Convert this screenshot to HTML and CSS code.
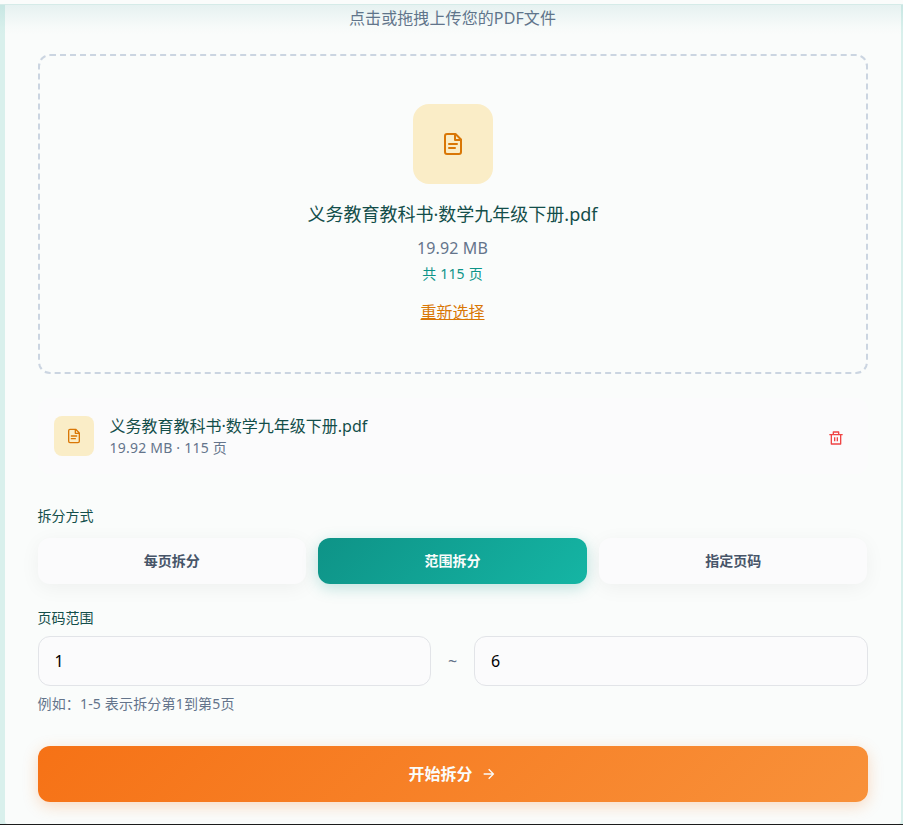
FILE: index.html
```html
<!DOCTYPE html>
<html lang="zh-CN">
<head>
<meta charset="utf-8">
<title>PDF 拆分</title>
<link rel="stylesheet" href="styles.css">
</head>
<body>
<div class="topbar"></div>
<main class="stage">
  <section class="card">
    <p class="lead">点击或拖拽上传您的PDF文件</p>
    <div class="dropzone">
      <div class="file-icon file-icon-lg">
        <svg viewBox="0 0 24 24" width="24" height="24"><path class="stroke" d="M14.500 2H6A2 2 0 0 0 4 4V20A2 2 0 0 0 6 22H18A2 2 0 0 0 20 20V7.500ZM14 2V8H20M8 12H16M8 16H14"/></svg>
      </div>
      <p class="drop-name">义务教育教科书·数学九年级下册.pdf</p>
      <p class="drop-size">19.92 MB</p>
      <p class="drop-pages">共 115 页</p>
      <a class="reselect">重新选择</a>
    </div>
    <div class="file-row">
      <div class="file-icon file-icon-sm">
        <svg viewBox="0 0 24 24" width="16" height="16"><path class="stroke" d="M14.500 2H6A2 2 0 0 0 4 4V20A2 2 0 0 0 6 22H18A2 2 0 0 0 20 20V7.500ZM14 2V8H20M8 12H16M8 16H14"/></svg>
      </div>
      <div class="file-info">
        <p class="file-name">义务教育教科书·数学九年级下册.pdf</p>
        <p class="file-meta">19.92 MB · 115 页</p>
      </div>
      <button class="delete" aria-label="删除">
        <svg viewBox="0 0 24 24" width="16" height="16"><path d="M17 6H22V8H20V21C20 21.5523 19.5523 22 19 22H5C4.44772 22 4 21.5523 4 21V8H2V6H7V3C7 2.44772 7.44772 2 8 2H16C16.5523 2 17 2.44772 17 3V6ZM18 8H6V20H18V8ZM9 11H11V17H9V11ZM13 11H15V17H13V11ZM9 4V6H15V4H9Z"/></svg>
      </button>
    </div>
    <p class="label">拆分方式</p>
    <div class="modes">
      <button class="mode">每页拆分</button>
      <button class="mode active">范围拆分</button>
      <button class="mode">指定页码</button>
    </div>
    <p class="label">页码范围</p>
    <div class="range">
      <input class="field" type="text" value="1">
      <span class="tilde">~</span>
      <input class="field" type="text" value="6">
    </div>
    <p class="hint">例如：1-5 表示拆分第1到第5页</p>
    <button class="submit">开始拆分
      <svg viewBox="0 0 24 24" width="16" height="16"><path d="M16.1716 10.9999L10.8076 5.63589L12.2218 4.22168L20 11.9999L12.2218 19.778L10.8076 18.3638L16.1716 12.9999H4V10.9999H16.1716Z"/></svg>
    </button>
  </section>
</main>
</body>
</html>
```
FILE: styles.css
```css
* {
  box-sizing: border-box;
}

body {
  margin: 0;
  height: 825px;
  overflow: hidden;
  display: flex;
  flex-direction: column;
  border-bottom: 1px solid #1c1c1c;
  background: #d9f0ec;
  font-family: "Noto Sans", "Noto Sans CJK SC", sans-serif;
  font-size: 16px;
  line-height: 24px;
}

p {
  margin: 0;
}

button,
input {
  font: inherit;
}

.topbar {
  flex: none;
  position: relative;
  height: 5px;
  background: #fafcfb;
  border-bottom: 1px solid #d5ebe8;
}

/* Soft shade that the bar casts on the content below it */
.topbar::after {
  content: "";
  position: absolute;
  top: 5px;
  left: 0;
  right: 0;
  height: 30px;
  background: linear-gradient(rgba(13, 130, 130, 0.085), rgba(13, 130, 130, 0.05) 35%, rgba(13, 130, 130, 0.01) 75%, rgba(13, 130, 130, 0));
  pointer-events: none;
}

.stage {
  flex: 1;
  padding: 0 2px 0 5px;
}

.card {
  height: 819px;
  padding: 1px 33.5px 0 32.5px;
  background: #fafcfb;
  border-radius: 0 0 3px 3px;
}

.lead {
  color: #64748b;
  letter-spacing: 0.1px;
  text-align: center;
}

.dropzone {
  display: flex;
  flex-direction: column;
  align-items: center;
  height: 320px;
  margin-top: 24px;
  padding-top: 48px;
  border: 2px dashed #cbd5e1;
  border-radius: 12px;
}

.file-icon {
  flex: none;
  display: flex;
  align-items: center;
  justify-content: center;
  background: #faedc7;
}

.file-icon-lg {
  width: 80px;
  height: 80px;
  border-radius: 16px;
}

.file-icon-sm {
  width: 40px;
  height: 40px;
  border-radius: 8px;
}

.stroke {
  fill: none;
  stroke: #d97706;
  stroke-width: 2;
  stroke-linecap: round;
  stroke-linejoin: round;
}

.drop-name {
  margin-top: 16px;
  color: #134e4a;
  font-size: 18px;
  line-height: 28px;
}

.drop-size {
  margin-top: 8px;
  color: #64748b;
  letter-spacing: 0.15px;
}

.drop-pages {
  margin-top: 4px;
  color: #0d9488;
  font-size: 14px;
  line-height: 20px;
  letter-spacing: 0.2px;
}

.reselect {
  margin-top: 16px;
  color: #d97706;
  text-decoration: underline;
}

.file-row {
  display: flex;
  align-items: center;
  gap: 16px;
  margin: 24px 0 32px;
  padding: 16px;
  background: #fbfbfc;
  border-radius: 12px;
}

.file-info {
  flex: 1;
}

.file-name {
  color: #134e4a;
}

.file-meta {
  color: #64748b;
  font-size: 14px;
  line-height: 20px;
  letter-spacing: 0.22px;
}

.delete {
  display: flex;
  padding: 12px 8px 8px;
  border: 0;
  background: none;
}

.delete path {
  fill: #ef4444;
}

.label {
  color: #134e4a;
  font-size: 14px;
  line-height: 20px;
}

.modes {
  display: grid;
  grid-template-columns: repeat(3, 1fr);
  gap: 12px;
  margin: 12px 0 24px;
}

.mode {
  height: 46px;
  padding: 0;
  border: 0;
  border-radius: 12px;
  background: #fbfbfc;
  box-shadow: 0 4px 20px rgba(0, 0, 0, 0.05);
  color: #475569;
  font-size: 14px;
  font-weight: 700;
}

.mode.active {
  background: linear-gradient(135deg, #0e9387, #15b5a4);
  box-shadow: 0 4px 15px rgba(13, 148, 136, 0.25);
  color: #fafcfb;
}

.range {
  display: flex;
  align-items: center;
  gap: 16px;
  margin: 8px 0;
}

.field {
  flex: 1;
  min-width: 0;
  height: 50px;
  padding: 0 16px;
  border: 1px solid #e2e4e8;
  border-radius: 12px;
  background: #fbfbfc;
  color: #000;
}

.tilde {
  width: 11px;
  color: #64748b;
  text-align: center;
}

.hint {
  color: #64748b;
  font-size: 14px;
  line-height: 20px;
  letter-spacing: 0.17px;
}

.submit {
  display: flex;
  align-items: center;
  justify-content: center;
  gap: 8px;
  width: 100%;
  height: 56px;
  margin-top: 32px;
  border: 0;
  border-radius: 12px;
  background: linear-gradient(135deg, #f67216, #f8913a);
  box-shadow: 0 4px 15px rgba(249, 115, 22, 0.25);
  color: #fafcfb;
  font-weight: 700;
}

.submit path {
  fill: #fafcfb;
}
```
